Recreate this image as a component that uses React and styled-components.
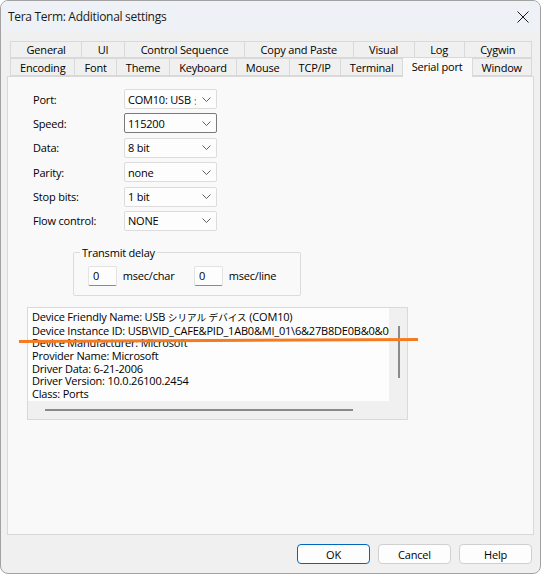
import React from "react";
import styled, { createGlobalStyle } from "styled-components";

const Global = createGlobalStyle`
  html, body { margin: 0; padding: 0; background: #ffffff; }
  body {
    font-family: "Open Sans", "Noto Sans CJK JP", sans-serif;
    font-size: 11px;
    color: #000;
  }
  * { box-sizing: border-box; }
`;

const Window = styled.div`
  position: relative;
  width: 541px;
  height: 574px;
  border: 1px solid #a2a2a2;
  border-radius: 8px;
  background: #f0f0f0;
  overflow: hidden;
  display: flex;
  flex-direction: column;
`;

const TitleBar = styled.div`
  height: 31px;
  flex: none;
  display: flex;
  align-items: center;
  justify-content: space-between;
  padding: 0 10px 0 7px;
  background: #eef2f7;
`;

const Title = styled.span`
  font-size: 12px;
  letter-spacing: -0.3px;
  color: #1a1a1a;
`;

const CloseButton = styled.span`
  display: flex;
  width: 14px;
  height: 14px;
  align-items: center;
  justify-content: center;
`;

const Body = styled.div`
  flex: 1;
  display: flex;
  flex-direction: column;
  padding: 9px 6px 9px 6px;
`;

const TabRow = styled.div`
  display: flex;
  height: ${(p) => p.$h}px;
  margin: 0 2px 0 3px;
  align-items: flex-end;
`;

const Tab = styled.div`
  flex: 1 1 auto;
  height: ${(p) => (p.$active ? p.$h + 2 : p.$h)}px;
  margin: 0 ${(p) => (p.$active ? "-1px" : "0")};
  position: relative;
  z-index: ${(p) => (p.$active ? 2 : 1)};
  margin-bottom: ${(p) => (p.$active ? "-1px" : "0")};
  display: flex;
  align-items: ${(p) => (p.$active ? "flex-start" : "center")};
  padding-top: ${(p) => (p.$active ? "1px" : "0")};
  justify-content: center;
  white-space: nowrap;
  padding-left: 6px;
  padding-right: 6px;
  border: 1px solid #d9d9d9;
  border-bottom: ${(p) => (p.$active ? "none" : "1px solid #d9d9d9")};
  border-right: ${(p) => (p.$last || p.$active ? "1px solid #d9d9d9" : "none")};
  border-left: 1px solid #d9d9d9;
  background: ${(p) => (p.$active ? "#f9f9f9" : "#f0f0f0")};
  font-size: 11px;
  letter-spacing: -0.2px;
`;

const Panel = styled.div`
  flex: 1;
  border: 1px solid #d9d9d9;
  background: #f9f9f9;
  padding: 12px 0 0 0;
  display: flex;
  flex-direction: column;
  align-items: flex-start;
`;

const Form = styled.div`
  display: grid;
  grid-template-columns: 91px 93px;
  row-gap: 4.4px;
  margin-left: 25px;
`;

const Label = styled.div`
  height: 20px;
  display: flex;
  align-items: center;
  letter-spacing: -0.2px;
`;

const Select = styled.div`
  height: 20px;
  display: flex;
  align-items: center;
  background: #fdfdfd;
  border: 1px solid ${(p) => (p.$focus ? "#7a7a7a" : "#dcdcdc")};
  border-radius: 2px;
  padding-left: 3px;
`;

const SelectValue = styled.span`
  flex: 1;
  overflow: hidden;
  white-space: nowrap;
  letter-spacing: -0.2px;
`;

const Jp = styled.span`
  font-size: 9.6px;
  letter-spacing: 0;
`;

const Chevron = styled.span`
  flex: none;
  width: 20px;
  display: flex;
  align-items: center;
  justify-content: center;
`;

const Group = styled.fieldset`
  margin: 15px 0 0 65px;
  width: 228px;
  height: 50px;
  border: 1px solid #dcdcdc;
  border-radius: 2px;
  padding: 6px 0 0 6px;
  min-width: 0;
`;

const Legend = styled.legend`
  padding: 0 2px;
  margin-left: 0;
  letter-spacing: -0.2px;
  line-height: 14px;
`;

const DelayRow = styled.div`
  display: flex;
  align-items: center;
  padding-left: 8px;
`;

const DelayInput = styled.div`
  width: 29px;
  height: 20px;
  background: #fdfdfd;
  border: 1px solid #e3e3e3;
  border-bottom-color: #8a8a8a;
  border-radius: 2px;
  display: flex;
  align-items: center;
  padding-left: 4px;
  margin-right: 6px;
`;

const DelayUnit = styled.span`
  width: 72px;
  letter-spacing: -0.2px;
`;

const InfoBox = styled.div`
  margin: 11px 0 0 19px;
  width: 381px;
  height: 113px;
  border: 1px solid #d9d9d9;
  display: grid;
  grid-template-columns: 1fr 18px;
  grid-template-rows: 1fr 18px;
  background: #f0f0f0;
`;

const InfoText = styled.div`
  background: #fdfdfd;
  padding: 3px 0 0 4px;
  overflow: hidden;
  white-space: nowrap;
  line-height: 12.7px;
  letter-spacing: -0.2px;
`;

const VScroll = styled.div`
  display: flex;
  justify-content: center;
  padding-top: 18px;
  padding-left: 1px;
`;

const VThumb = styled.div`
  width: 2px;
  height: 52px;
  background: #8a8a8a;
`;

const HScroll = styled.div`
  display: flex;
  align-items: center;
  padding-left: 17px;
`;

const HThumb = styled.div`
  width: 308px;
  height: 2px;
  background: #8a8a8a;
`;

const ButtonRow = styled.div`
  display: flex;
  justify-content: flex-end;
  gap: 8px;
  margin-top: 9px;
  padding-right: 2px;
`;

const Button = styled.div`
  width: 73px;
  height: 20px;
  border: 1px solid ${(p) => (p.$primary ? "#0067c0" : "#d0d0d0")};
  border-radius: 4px;
  background: #fdfdfd;
  display: flex;
  align-items: center;
  justify-content: center;
  letter-spacing: -0.2px;
`;

const Annotation = styled.svg`
  position: absolute;
  left: 0;
  top: 0;
  pointer-events: none;
`;

const row1 = ["General", "UI", "Control Sequence", "Copy and Paste", "Visual", "Log", "Cygwin"];
const row2 = ["Encoding", "Font", "Theme", "Keyboard", "Mouse", "TCP/IP", "Terminal", "Serial port", "Window"];

const fields = [
  ["Port:", <>COM10: USB <Jp>シリアル デバイス</Jp></>],
  ["Speed:", "115200", true],
  ["Data:", "8 bit"],
  ["Parity:", "none"],
  ["Stop bits:", "1 bit"],
  ["Flow control:", "NONE"],
];

const info = [
  <>Device Friendly Name: USB <Jp>シリアル デバイス</Jp> (COM10)</>,
  "Device Instance ID: USB\\VID_CAFE&PID_1AB0&MI_01\\6&27B8DE0B&0&0001",
  "Device Manufacturer: Microsoft",
  "Provider Name: Microsoft",
  "Driver Data: 6-21-2006",
  "Driver Version: 10.0.26100.2454",
  "Class: Ports",
];

const ChevronIcon = () => (
  <svg width="9" height="5" viewBox="0 0 9 5">
    <path d="M0.5 0.5 L4.5 4.5 L8.5 0.5" fill="none" stroke="#606060" strokeWidth="1" />
  </svg>
);

export default function App() {
  return (
    <>
      <Global />
      <Window>
        <TitleBar>
          <Title>Tera Term: Additional settings</Title>
          <CloseButton>
            <svg width="12" height="12" viewBox="0 0 12 12">
              <path d="M0.5 0.5 L11.5 11.5 M11.5 0.5 L0.5 11.5" stroke="#1a1a1a" strokeWidth="1" />
            </svg>
          </CloseButton>
        </TitleBar>
        <Body>
          <TabRow $h={17}>
            {row1.map((t, i) => (
              <Tab key={t} $h={17} $last={i === row1.length - 1}>
                {t}
              </Tab>
            ))}
          </TabRow>
          <TabRow $h={18}>
            {row2.map((t, i) => (
              <Tab key={t} $h={18} $active={t === "Serial port"} $last={i === row2.length - 1}>
                {t}
              </Tab>
            ))}
          </TabRow>
          <Panel>
            <Form>
              {fields.map(([l, v, f]) => (
                <React.Fragment key={l}>
                  <Label>{l}</Label>
                  <Select $focus={f}>
                    <SelectValue>{v}</SelectValue>
                    <Chevron>
                      <ChevronIcon />
                    </Chevron>
                  </Select>
                </React.Fragment>
              ))}
            </Form>
            <Group>
              <Legend>Transmit delay</Legend>
              <DelayRow>
                <DelayInput>0</DelayInput>
                <DelayUnit>msec/char</DelayUnit>
                <DelayInput>0</DelayInput>
                <DelayUnit>msec/line</DelayUnit>
              </DelayRow>
            </Group>
            <InfoBox>
              <InfoText>
                {info.map((l, i) => (
                  <div key={i}>{l}</div>
                ))}
              </InfoText>
              <VScroll>
                <VThumb />
              </VScroll>
              <HScroll>
                <HThumb />
              </HScroll>
              <div />
            </InfoBox>
          </Panel>
          <ButtonRow>
            <Button $primary>OK</Button>
            <Button>Cancel</Button>
            <Button>Help</Button>
          </ButtonRow>
        </Body>
        <Annotation width="541" height="574" viewBox="0 0 541 574">
          <line x1="18" y1="340.5" x2="417" y2="338.5" stroke="#f47b20" strokeWidth="3" />
        </Annotation>
      </Window>
    </>
  );
}
